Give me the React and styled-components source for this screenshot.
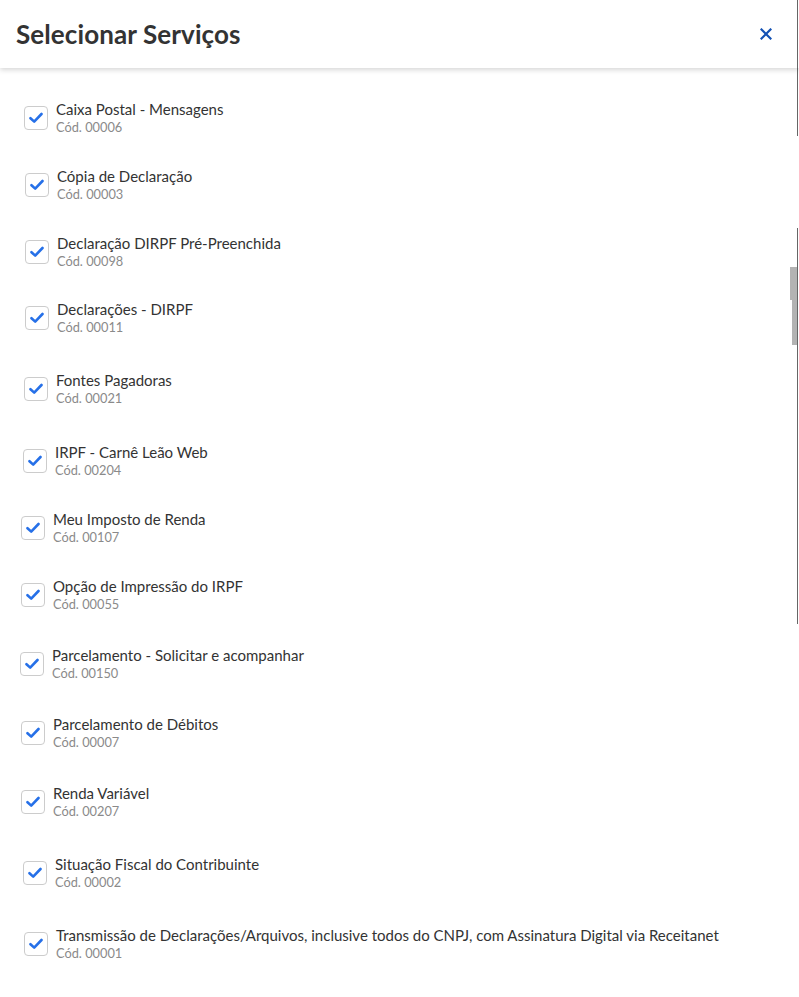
import React from "react";
import styled, { createGlobalStyle } from "styled-components";

const services = [
  { name: "Caixa Postal - Mensagens", code: "00006", dy: 38, dx: 24 },
  { name: "Cópia de Declaração", code: "00003", dy: 43, dx: 25 },
  { name: "Declaração DIRPF Pré-Preenchida", code: "00098", dy: 43, dx: 25 },
  { name: "Declarações - DIRPF", code: "00011", dy: 42, dx: 25 },
  { name: "Fontes Pagadoras", code: "00021", dy: 47, dx: 24 },
  { name: "IRPF - Carnê Leão Web", code: "00204", dy: 48, dx: 23 },
  { name: "Meu Imposto de Renda", code: "00107", dy: 43, dx: 21 },
  { name: "Opção de Impressão do IRPF", code: "00055", dy: 43, dx: 21 },
  { name: "Parcelamento - Solicitar e acompanhar", code: "00150", dy: 45, dx: 20 },
  { name: "Parcelamento de Débitos", code: "00007", dy: 45, dx: 21 },
  { name: "Renda Variável", code: "00207", dy: 45, dx: 21 },
  { name: "Situação Fiscal do Contribuinte", code: "00002", dy: 47, dx: 23 },
  {
    name: "Transmissão de Declarações/Arquivos, inclusive todos do CNPJ, com Assinatura Digital via Receitanet",
    code: "00001",
    dy: 47,
    dx: 24,
  },
];

const GlobalStyle = createGlobalStyle`
  html, body {
    margin: 0;
    padding: 0;
    background: #ffffff;
  }
  body {
    font-family: Lato, "Open Sans", sans-serif;
    color: #333333;
  }
`;

const Modal = styled.div`
  position: relative;
  width: 799px;
  min-height: 997px;
  background: #ffffff;
  overflow: hidden;
`;

const Header = styled.header`
  display: flex;
  align-items: center;
  justify-content: space-between;
  height: 68px;
  padding: 0 21px 0 16px;
  box-sizing: border-box;
  box-shadow: 0 2px 5px rgba(0, 0, 0, 0.16);
  position: relative;
  z-index: 1;
`;

const Title = styled.h1`
  margin: 0;
  font-size: 26px;
  font-weight: 700;
  color: #333333;
  letter-spacing: 0.1px;
`;

const CloseButton = styled.button`
  display: flex;
  align-items: center;
  justify-content: center;
  width: 24px;
  height: 24px;
  padding: 0;
  border: none;
  background: none;
  color: #1351b4;
  cursor: pointer;
`;

const List = styled.ul`
  list-style: none;
  margin: 0;
  padding: 0 0 40px;
`;

const Row = styled.li`
  display: flex;
  align-items: center;
  gap: 8px;
  height: 24px;
  margin-top: ${(p) => p.$dy}px;
  padding-left: ${(p) => p.$dx}px;
`;

const Box = styled.span`
  flex: none;
  display: flex;
  align-items: center;
  justify-content: center;
  width: 22px;
  height: 22px;
  border: 1px solid #cccccc;
  border-radius: 4px;
  background: #ffffff;
  color: #2670e8;
`;

const Texts = styled.div`
  display: flex;
  flex-direction: column;
  margin-top: -1px;
`;

const Name = styled.span`
  font-size: 15px;
  line-height: 18px;
  color: #333333;
  white-space: nowrap;
`;

const Code = styled.span`
  margin-top: 2px;
  font-size: 12.8px;
  line-height: 15px;
  color: #8a8a8a;
`;

const EdgeLine = styled.div`
  position: absolute;
  right: 1px;
  top: ${(p) => p.$top}px;
  height: ${(p) => p.$height}px;
  width: 1px;
  background: #666666;
`;

const Thumb = styled.div`
  position: absolute;
  right: 2px;
  top: 267px;
  width: 5px;
  height: 78px;
  background: #b3b3b3;
  &::before {
    content: "";
    position: absolute;
    left: -2px;
    top: 0;
    width: 2px;
    height: 33px;
    background: #b3b3b3;
  }
`;

const Check = () => (
  <svg width="14" height="12" viewBox="0 0 14 12" fill="none">
    <path
      d="M1.5 6.2 L5.2 9.6 L12.5 2"
      stroke="currentColor"
      strokeWidth="2.6"
      strokeLinecap="round"
      strokeLinejoin="round"
    />
  </svg>
);

const Cross = () => (
  <svg width="12" height="12" viewBox="0 0 12 12">
    <path
      d="M1.5 1.5 L10.5 10.5 M10.5 1.5 L1.5 10.5"
      stroke="currentColor"
      strokeWidth="2.2"
      strokeLinecap="square"
    />
  </svg>
);

export default function App() {
  return (
    <>
      <GlobalStyle />
      <Modal>
        <Header>
          <Title>Selecionar Serviços</Title>
          <CloseButton aria-label="Fechar">
            <Cross />
          </CloseButton>
        </Header>
        <List>
          {services.map((s) => (
            <Row key={s.code} $dy={s.dy} $dx={s.dx}>
              <Box>
                <Check />
              </Box>
              <Texts>
                <Name>{s.name}</Name>
                <Code>Cód. {s.code}</Code>
              </Texts>
            </Row>
          ))}
        </List>
        <EdgeLine $top={0} $height={136} />
        <EdgeLine $top={228} $height={396} />
        <Thumb />
      </Modal>
    </>
  );
}
